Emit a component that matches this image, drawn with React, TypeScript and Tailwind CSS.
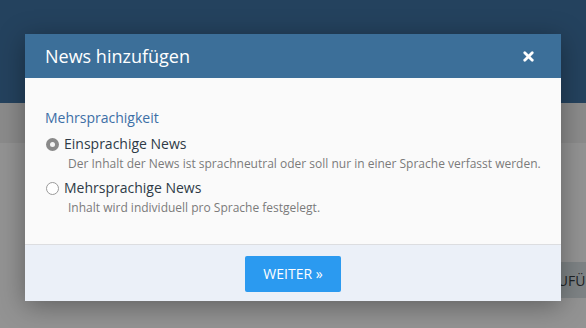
import { X } from "lucide-react";

const OPTIONS = [
  {
    label: "Einsprachige News",
    hint: "Der Inhalt der News ist sprachneutral oder soll nur in einer Sprache verfasst werden.",
    checked: true,
  },
  {
    label: "Mehrsprachige News",
    hint: "Inhalt wird individuell pro Sprache festgelegt.",
    checked: false,
  },
];

function Radio({ checked }: { checked: boolean }) {
  if (checked) {
    return (
      <span className="w-[13px] h-[13px] rounded-full bg-[#8a8a8a] flex items-center justify-center shrink-0">
        <span className="w-[5px] h-[5px] rounded-full bg-[#f4f4f4]" />
      </span>
    );
  }
  return <span className="w-[13px] h-[13px] rounded-full border border-[#9a9a9a] bg-white shrink-0" />;
}

export default function App() {
  return (
    <div
      className="relative w-[586px] h-[328px] overflow-hidden bg-[#939393]"
      style={{ fontFamily: '"Open Sans", sans-serif' }}
    >
      {/* page behind the overlay */}
      <div className="h-[103px] bg-[#24425e]" />
      <div className="h-[40px] bg-[#8b8b8b]" />
      <div className="flex mt-[119px] pl-[515px]">
        <div className="h-[36px] shrink-0 bg-[#7e8385] flex items-center px-[10px] text-[14px] text-[#1f2326] whitespace-nowrap">
          HINZUFÜGEN
        </div>
      </div>

      {/* Modal */}
      <div className="absolute left-[25px] top-[34px] w-[536px] shadow-[0_5px_25px_rgba(0,0,0,0.35)]">
        <div className="h-[44px] bg-[#3c6f99] px-5 flex items-center justify-between">
          <h2 className="text-[18px] text-white leading-none">News hinzufügen</h2>
          <button className="text-white mr-[5px]">
            <X className="w-[15px] h-[15px]" strokeWidth={4.5} />
          </button>
        </div>

        <div className="bg-[#fafafa] h-[166px] px-5 pt-[30px]">
          <p className="text-[14px] leading-5 text-[#3d6fa6]">Mehrsprachigkeit</p>
          {OPTIONS.map((o) => (
            <div key={o.label} className="mt-[6px]">
              <label className="flex items-center gap-[5px] pl-[1px] h-5">
                <Radio checked={o.checked} />
                <span className="text-[14px] leading-5 text-[#2e3a47]">{o.label}</span>
              </label>
              <p className="text-[12px] leading-4 text-[#7b7b7b] pl-[23px] mt-[2px]">{o.hint}</p>
            </div>
          ))}
        </div>

        <div className="h-[57px] bg-[#ebf0f8] border-t border-[#dcdde0] flex items-center justify-center">
          <button className="w-[96px] h-[36px] rounded-[2px] bg-[#2b9af0] text-white text-[14px] mt-[1px]">
            WEITER »
          </button>
        </div>
      </div>
    </div>
  );
}
